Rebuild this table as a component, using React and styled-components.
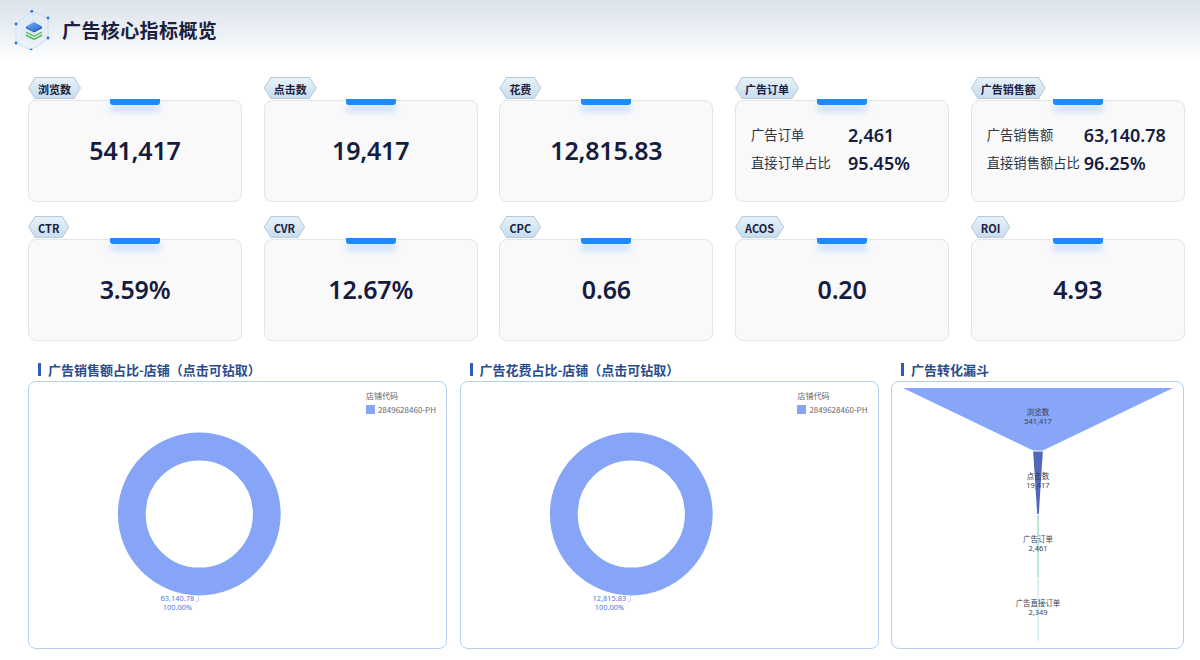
import React from "react";
import styled, { createGlobalStyle } from "styled-components";

const Global = createGlobalStyle`
  html, body { margin: 0; padding: 0; background: #fff; }
  body { font-family: "Noto Sans", "Noto Sans CJK SC", sans-serif; color: #1b2040; }
  * { box-sizing: border-box; }
`;

const Page = styled.div`
  width: 1200px;
  height: 660px;
  overflow: hidden;
  background: #fff;
`;

const Header = styled.header`
  height: 62px;
  display: flex;
  align-items: center;
  gap: 10px;
  padding: 0 0 3px 12px;
  background: linear-gradient(180deg, #dce3eb 0%, #e9eef3 45%, #ffffff 100%);
`;

const Title = styled.h1`
  margin: 0;
  font-family: "Noto Sans CJK SC", sans-serif;
  font-size: 19px;
  font-weight: 700;
  color: #1b2040;
  letter-spacing: 0.4px;
`;

const Main = styled.main`
  padding: 15px 15px 0 28px;
`;

const CardGrid = styled.div`
  display: grid;
  grid-template-columns: repeat(5, 214px);
  column-gap: 21.7px;
  row-gap: 14px;
`;

const Cell = styled.div`
  display: flex;
  flex-direction: column;
  gap: 1px;
`;

const TagOuter = styled.div`
  align-self: flex-start;
  height: 22px;
  padding: 1px;
  background: #b9c9d6;
  clip-path: polygon(0 50%, 7px 0, calc(100% - 7px) 0, 100% 50%, calc(100% - 7px) 100%, 7px 100%);
`;

const TagInner = styled.div`
  height: 20px;
  padding: 1px 9px 0;
  display: flex;
  align-items: center;
  font-family: "Noto Sans CJK SC", sans-serif;
  font-size: 11px;
  font-weight: 700;
  color: #1b2040;
  background: linear-gradient(180deg, #e6f2fa 0%, #c7ddef 100%);
  clip-path: polygon(0 50%, 6.5px 0, calc(100% - 6.5px) 0, 100% 50%, calc(100% - 6.5px) 100%, 6.5px 100%);
`;

const Card = styled.div`
  position: relative;
  height: 102px;
  background: #f9f9fa;
  border: 1px solid #e3e5e8;
  border-radius: 8px;
  display: flex;
  align-items: center;
  justify-content: center;
`;

const Accent = styled.span`
  position: absolute;
  top: -2px;
  left: 50%;
  width: 50px;
  height: 6px;
  margin-left: -25px;
  background: #1a8cff;
  border-radius: 0 0 3px 3px;
  box-shadow: 0 6px 7px rgba(80, 160, 255, 0.35);
`;

const Value = styled.div`
  font-family: "Noto Sans", sans-serif;
  font-size: 25px;
  font-weight: 600;
  color: #161c3f;
  letter-spacing: -0.2px;
  margin-top: -3px;
`;

const Pairs = styled.div`
  align-self: flex-start;
  width: 100%;
  padding: 22px 0 0 15px;
  display: grid;
  grid-template-columns: 97px auto;
  row-gap: 4px;
  align-items: center;
`;

const PairLabel = styled.span`
  font-family: "Noto Sans CJK SC", sans-serif;
  font-size: 13.3px;
  color: #2f3440;
  white-space: nowrap;
  line-height: 24px;
`;

const PairValue = styled.span`
  font-family: "Noto Sans", sans-serif;
  font-size: 18px;
  font-weight: 600;
  color: #161c3f;
  line-height: 24px;
`;

const PanelGrid = styled.div`
  margin-top: 18px;
  display: grid;
  grid-template-columns: 419px 419px 293px;
  column-gap: 12.5px;
`;

const Section = styled.section`
  display: flex;
  flex-direction: column;
  gap: 2px;
`;

const SectionTitle = styled.h2`
  margin: 0;
  height: 20px;
  padding-left: 10px;
  display: flex;
  align-items: center;
  gap: 7px;
  font-family: "Noto Sans CJK SC", sans-serif;
  font-size: 13px;
  font-weight: 700;
  color: #2a4b8d;
  &::before {
    content: "";
    width: 3px;
    height: 13px;
    background: #2f5cb8;
  }
`;

const Panel = styled.div`
  position: relative;
  height: 268px;
  border: 1px solid #b8cff0;
  border-radius: 8px;
  background: #fff;
  overflow: hidden;
`;

const Chart = styled.svg`
  display: block;
  width: 100%;
  height: 100%;
`;

const Legend = styled.div`
  position: absolute;
  top: 8px;
  right: 10px;
  display: flex;
  flex-direction: column;
  gap: 3px;
  font-family: "Noto Sans CJK SC", sans-serif;
  font-size: 8px;
  color: #666;
`;

const LegendItem = styled.div`
  display: flex;
  align-items: center;
  gap: 3px;
  &::before {
    content: "";
    width: 9px;
    height: 9px;
    background: #86a5f7;
  }
`;

const Logo = () => (
  <svg width="40" height="40" viewBox="12 9 40 40">
    <defs>
      <radialGradient id="lg" cx="50%" cy="50%" r="50%">
        <stop offset="0%" stopColor="#d7e8fb" />
        <stop offset="100%" stopColor="#e6eef7" stopOpacity="0.4" />
      </radialGradient>
      <linearGradient id="db" x1="0" y1="0" x2="1" y2="1">
        <stop offset="0%" stopColor="#7ab4f5" />
        <stop offset="100%" stopColor="#1f63d6" />
      </linearGradient>
    </defs>
    <circle cx="32" cy="29.5" r="18" fill="url(#lg)" />
    <polygon points="31.7,10.3 48,17 48,37 31,49 16,42 16,23" fill="none" stroke="#bcd5f3" strokeWidth="0.6" />
    <line x1="31.7" y1="10.3" x2="34" y2="22" stroke="#c9dcf4" strokeWidth="0.5" />
    <line x1="16" y1="42" x2="27" y2="33" stroke="#c9dcf4" strokeWidth="0.5" />
    <line x1="48" y1="37" x2="41" y2="33" stroke="#c9dcf4" strokeWidth="0.5" />
    {[[31.7,10.3],[48,17],[48,37],[31,49],[16,42],[16,23]].map(([x,y],i)=>(
      <circle key={i} cx={x} cy={y} r="1.4" fill="#1f74f0" />
    ))}
    <path d="M26 33.5 L34 37.5 L42 33.5 L42 35 L34 39 L26 35 Z" fill="#3fae3a" />
    <path d="M26 30.5 L34 34.5 L42 30.5 L42 32 L34 36 L26 32 Z" fill="#5cc24a" />
    <path d="M26 25.5 L34 21 L42 25.5 L34 30 Z" fill="url(#db)" />
    <path d="M26 25.5 L34 30 L34 31.6 L26 27.2 Z" fill="#2a5fc0" />
    <path d="M42 25.5 L34 30 L34 31.6 L42 27.2 Z" fill="#1b4aa8" />
  </svg>
);

const Donut = ({ value }) => {
  const cx = 171, cy = 133;
  return (
    <Chart viewBox="0 0 419 268">
      <circle cx={cx} cy={cy} r="68" fill="none" stroke="#86a5f7" strokeWidth="28" />
      <path d={`M${cx - 1} ${cy + 82} L${cx - 1} ${cy + 88} L${cx - 4} ${cy + 88}`} fill="none" stroke="#b7c8f5" strokeWidth="0.8" />
      <text x={cx - 22} y={cy + 88} textAnchor="middle" fontFamily="Noto Sans, sans-serif" fontSize="7.5" fill="#5577d6">{value}</text>
      <text x={cx - 22} y={cy + 96.5} textAnchor="middle" fontFamily="Noto Sans, sans-serif" fontSize="7.5" fill="#5577d6">100.00%</text>
    </Chart>
  );
};

const funnelData = [
  { name: "浏览数", value: 541417, label: "541,417", color: "#87a6f8" },
  { name: "点击数", value: 19417, label: "19,417", color: "#5068bc" },
  { name: "广告订单", value: 2461, label: "2,461", color: "#a8e0d6" },
  { name: "广告直接订单", value: 2349, label: "2,349", color: "#d6eef6" },
];

const Funnel = () => {
  const cx = 147, top = 6, segH = 64, maxW = 272;
  const w = (v) => Math.max(1.6, (v / 541417) * maxW);
  return (
    <Chart viewBox="0 0 293 268">
      {funnelData.map((d, i) => {
        const y0 = top + i * segH;
        const y1 = y0 + segH - 1;
        const wt = w(d.value);
        const next = funnelData[i + 1];
        const wb = next ? w(next.value) : wt;
        const mid = (y0 + y1) / 2;
        return (
          <g key={d.name}>
            <polygon
              points={`${cx - wt / 2},${y0} ${cx + wt / 2},${y0} ${cx + wb / 2},${y1} ${cx - wb / 2},${y1}`}
              fill={d.color}
            />
            <text x={cx} y={mid - 4} textAnchor="middle" fontFamily="Noto Sans CJK SC, sans-serif" fontSize="7.5" fill="#3a3d4a">{d.name}</text>
            <text x={cx} y={mid + 5} textAnchor="middle" fontFamily="Noto Sans, sans-serif" fontSize="7.5" fill="#3a3d4a">{d.label}</text>
          </g>
        );
      })}
    </Chart>
  );
};

const metrics = [
  { tag: "浏览数", value: "541,417" },
  { tag: "点击数", value: "19,417" },
  { tag: "花费", value: "12,815.83" },
  { tag: "广告订单", pairs: [["广告订单", "2,461"], ["直接订单占比", "95.45%"]] },
  { tag: "广告销售额", pairs: [["广告销售额", "63,140.78"], ["直接销售额占比", "96.25%"]] },
  { tag: "CTR", value: "3.59%" },
  { tag: "CVR", value: "12.67%" },
  { tag: "CPC", value: "0.66" },
  { tag: "ACOS", value: "0.20" },
  { tag: "ROI", value: "4.93" },
];

export default function App() {
  return (
    <Page>
      <Global />
      <Header>
        <Logo />
        <Title>广告核心指标概览</Title>
      </Header>
      <Main>
        <CardGrid>
          {metrics.map((m) => (
            <Cell key={m.tag}>
              <TagOuter>
                <TagInner>{m.tag}</TagInner>
              </TagOuter>
              <Card>
                <Accent />
                {m.pairs ? (
                  <Pairs>
                    {m.pairs.map(([l, v]) => (
                      <React.Fragment key={l}>
                        <PairLabel>{l}</PairLabel>
                        <PairValue>{v}</PairValue>
                      </React.Fragment>
                    ))}
                  </Pairs>
                ) : (
                  <Value>{m.value}</Value>
                )}
              </Card>
            </Cell>
          ))}
        </CardGrid>
        <PanelGrid>
          <Section>
            <SectionTitle>广告销售额占比-店铺（点击可钻取）</SectionTitle>
            <Panel>
              <Donut value="63,140.78" />
              <Legend>
                <span>店铺代码</span>
                <LegendItem>2849628460-PH</LegendItem>
              </Legend>
            </Panel>
          </Section>
          <Section>
            <SectionTitle>广告花费占比-店铺（点击可钻取）</SectionTitle>
            <Panel>
              <Donut value="12,815.83" />
              <Legend>
                <span>店铺代码</span>
                <LegendItem>2849628460-PH</LegendItem>
              </Legend>
            </Panel>
          </Section>
          <Section>
            <SectionTitle>广告转化漏斗</SectionTitle>
            <Panel>
              <Funnel />
            </Panel>
          </Section>
        </PanelGrid>
      </Main>
    </Page>
  );
}
